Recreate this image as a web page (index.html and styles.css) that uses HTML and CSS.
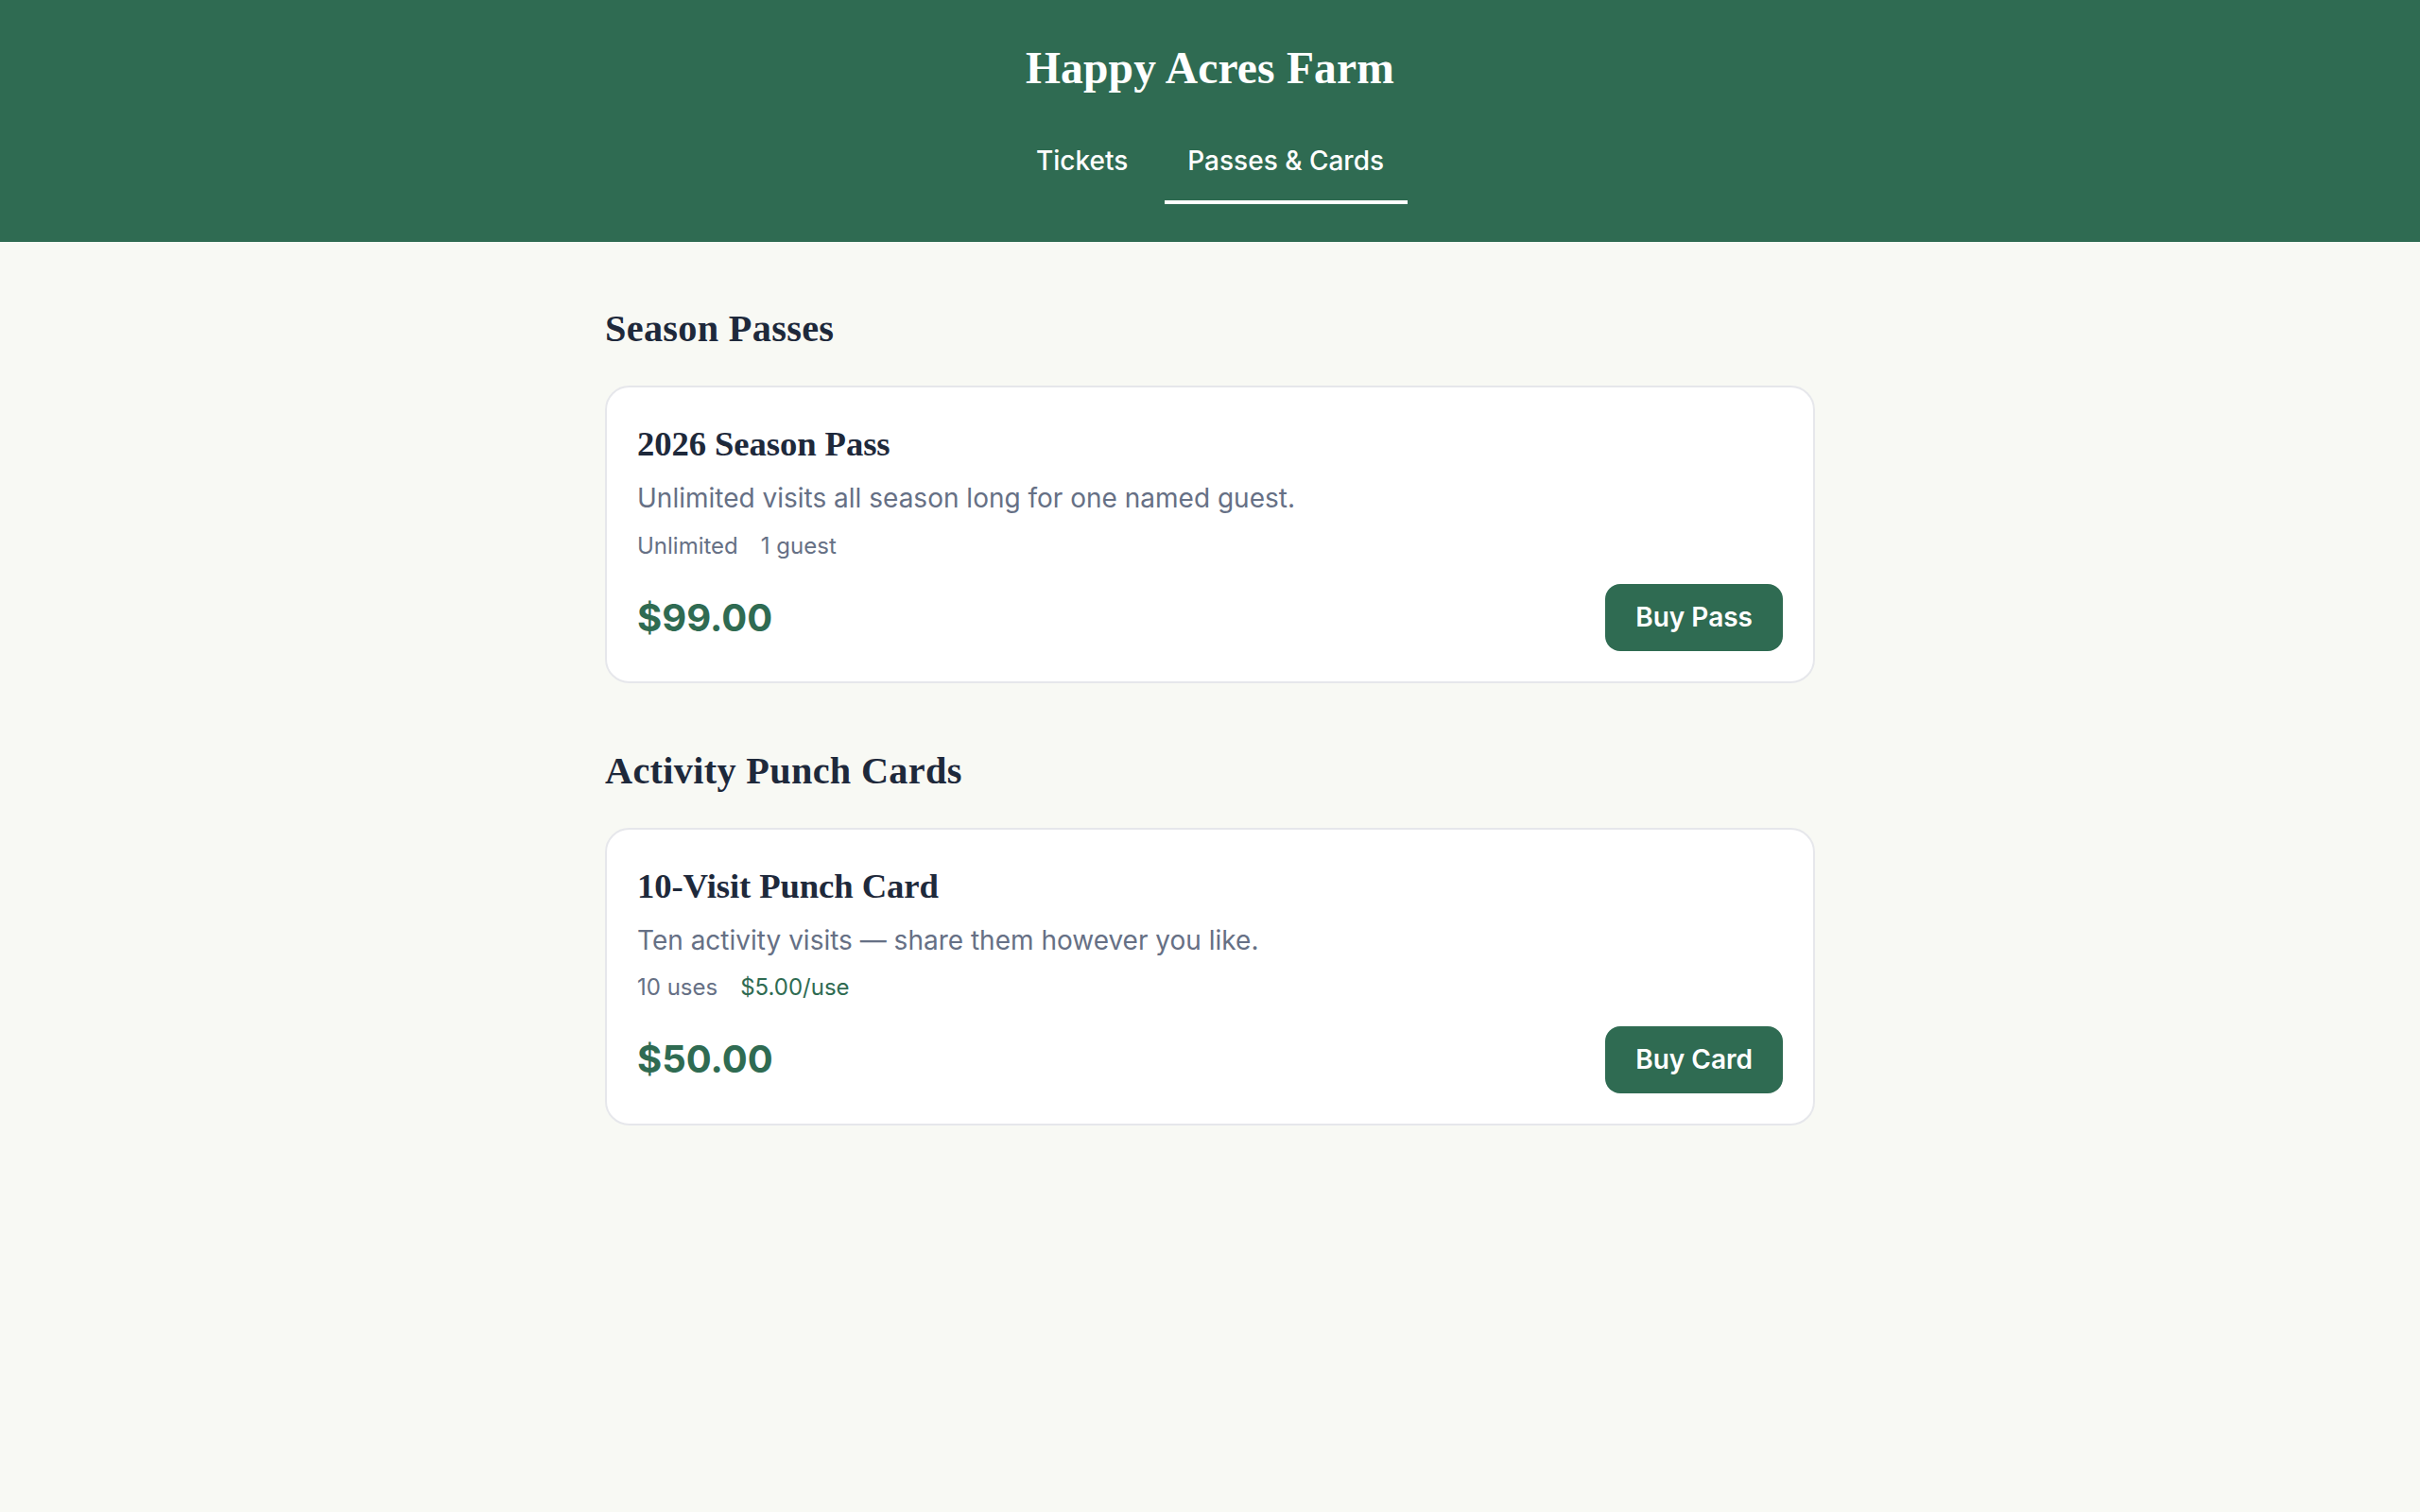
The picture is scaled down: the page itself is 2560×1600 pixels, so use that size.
FILE: index.html
```html
<!DOCTYPE html>
<html lang="en">
<head>
<meta charset="utf-8">
<title>Happy Acres Farm</title>
<link rel="stylesheet" href="styles.css">
</head>
<body>
<header class="site-header">
  <h1 class="brand">Happy Acres Farm</h1>
  <nav class="tabs">
    <a class="tab" href="#">Tickets</a>
    <a class="tab tab-active" href="#">Passes &amp; Cards</a>
  </nav>
</header>
<main class="content">
  <section class="group">
    <h2 class="group-title">Season Passes</h2>
    <article class="card">
      <h3 class="card-title">2026 Season Pass</h3>
      <p class="card-desc">Unlimited visits all season long for one named guest.</p>
      <div class="card-meta">
        <span>Unlimited</span>
        <span>1 guest</span>
      </div>
      <div class="card-foot">
        <span class="price">$99.00</span>
        <button class="buy" type="button">Buy Pass</button>
      </div>
    </article>
  </section>
  <section class="group">
    <h2 class="group-title">Activity Punch Cards</h2>
    <article class="card">
      <h3 class="card-title">10-Visit Punch Card</h3>
      <p class="card-desc">Ten activity visits — share them however you like.</p>
      <div class="card-meta">
        <span>10 uses</span>
        <span class="meta-accent">$5.00/use</span>
      </div>
      <div class="card-foot">
        <span class="price">$50.00</span>
        <button class="buy" type="button">Buy Card</button>
      </div>
    </article>
  </section>
</main>
</body>
</html>
```

FILE: styles.css
```css
* { box-sizing: border-box; }

html, body {
  margin: 0;
  padding: 0;
}

body {
  background: #f8f9f4;
  font-family: Inter, "Noto Sans", "Liberation Sans", sans-serif;
  color: #1e293b;
  min-height: 1600px;
}

.site-header {
  background: #2f6b52;
  height: 256px;
  padding-top: 43.5px;
  display: flex;
  flex-direction: column;
  align-items: center;
}

.brand {
  margin: 0;
  font-family: "Liberation Serif", "Times New Roman", serif;
  font-weight: 700;
  font-size: 47.5px;
  line-height: 1.2;
  letter-spacing: 0.2px;
  color: #ffffff;
}

.tabs {
  margin-top: 28.5px;
  display: flex;
  gap: 14px;
}

.tab {
  display: block;
  padding: 20px 24.5px 21px;
  font-size: 28px;
  line-height: 1.5;
  font-weight: 500;
  color: #ffffff;
  text-decoration: none;
  border-bottom: 4px solid transparent;
}

.tab-active {
  border-bottom-color: #ffffff;
}

.content {
  width: 1280px;
  margin: 0 auto;
  padding-top: 66px;
}

.group + .group {
  margin-top: 66.5px;
}

.group-title {
  margin: 0 0 33.6px;
  font-family: "Liberation Serif", "Times New Roman", serif;
  font-weight: 700;
  font-size: 40.3px;
  line-height: 1.3;
  letter-spacing: 0.3px;
  color: #1e293b;
}

.card {
  background: #ffffff;
  border: 2px solid #e6e7eb;
  border-radius: 25.6px;
  padding: 32px;
}

.card-title {
  margin: 0;
  font-family: "Liberation Serif", "Times New Roman", serif;
  font-weight: 700;
  font-size: 36.7px;
  line-height: 1.5;
  letter-spacing: -0.1px;
  color: #1e293b;
}

.card-desc {
  margin: 9px 0 0;
  font-size: 28px;
  line-height: 1.5;
  color: #667085;
}

.card-meta {
  margin-top: 11.6px;
  display: flex;
  gap: 24px;
  font-size: 24px;
  line-height: 1.5;
  color: #667085;
}

.meta-accent {
  color: #2f6b52;
}

.card-foot {
  margin-top: 22.4px;
  display: flex;
  align-items: center;
  justify-content: space-between;
}

.price {
  font-size: 40px;
  font-weight: 700;
  line-height: 1.2;
  color: #2f6b52;
}

.buy {
  font-family: Inter, "Noto Sans", "Liberation Sans", sans-serif;
  font-size: 28px;
  font-weight: 600;
  line-height: 1.4;
  padding: 16px 32px;
  border: 0;
  border-radius: 16px;
  background: #2f6b52;
  color: #ffffff;
  cursor: pointer;
}
```
